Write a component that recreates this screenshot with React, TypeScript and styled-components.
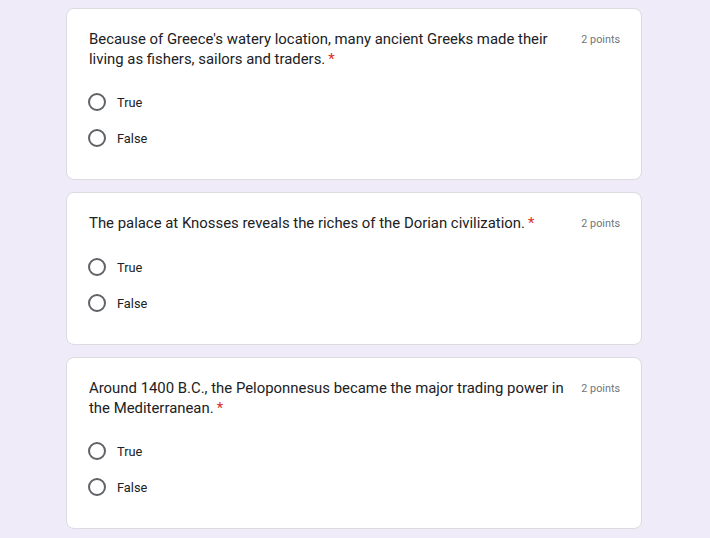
import React from "react";
import styled, { createGlobalStyle } from "styled-components";

const GlobalStyle = createGlobalStyle`
  html, body {
    margin: 0;
    padding: 0;
    background: #f0ebf8;
  }
  body {
    font-family: Roboto, "Liberation Sans", Arial, sans-serif;
    -webkit-font-smoothing: antialiased;
  }
`;

const Page = styled.div`
  display: flex;
  flex-direction: column;
  gap: 12px;
  padding: 8px 0 20px 66px;
  width: 576px;
  min-height: 538px;
  box-sizing: content-box;
`;

const Card = styled.section`
  background: #ffffff;
  border: 1px solid #dadce0;
  border-radius: 8px;
  padding: 20px 21px 23px 22px;
  display: flex;
  flex-direction: column;
`;

const Header = styled.div`
  display: flex;
  align-items: flex-start;
  justify-content: space-between;
`;

const Title = styled.div`
  flex: 1 1 auto;
  max-width: 476px;
  font-size: 14.9px;
  line-height: 20px;
  color: #202124;
  letter-spacing: 0;
`;

const Required = styled.span`
  color: #d93025;
  margin-left: 3px;
`;

const Points = styled.div`
  flex: 0 0 auto;
  font-size: 10.8px;
  line-height: 20px;
  margin-top: 1px;
  color: #70757a;
  white-space: nowrap;
`;

const Options = styled.div`
  display: flex;
  flex-direction: column;
  margin-top: 15px;
`;

const Option = styled.label`
  display: flex;
  align-items: center;
  height: 36px;
  cursor: pointer;
`;

const Radio = styled.span`
  width: 18px;
  height: 18px;
  margin-left: -1px;
  box-sizing: border-box;
  border: 2px solid #5f6368;
  border-radius: 50%;
  flex: 0 0 auto;
`;

const Label = styled.span`
  margin-left: 11px;
  font-size: 12.8px;
  color: #202124;
`;

const questions = [
  "Because of Greece's watery location, many ancient Greeks made their living as fishers, sailors and traders.",
  "The palace at Knosses reveals the riches of the Dorian civilization.",
  "Around 1400 B.C., the Peloponnesus became the major trading power in the Mediterranean.",
];

export default function App() {
  return (
    <>
      <GlobalStyle />
      <Page>
        {questions.map((q) => (
          <Card key={q}>
            <Header>
              <Title>
                {q}
                <Required>*</Required>
              </Title>
              <Points>2 points</Points>
            </Header>
            <Options>
              {["True", "False"].map((o) => (
                <Option key={o}>
                  <Radio />
                  <Label>{o}</Label>
                </Option>
              ))}
            </Options>
          </Card>
        ))}
      </Page>
    </>
  );
}
